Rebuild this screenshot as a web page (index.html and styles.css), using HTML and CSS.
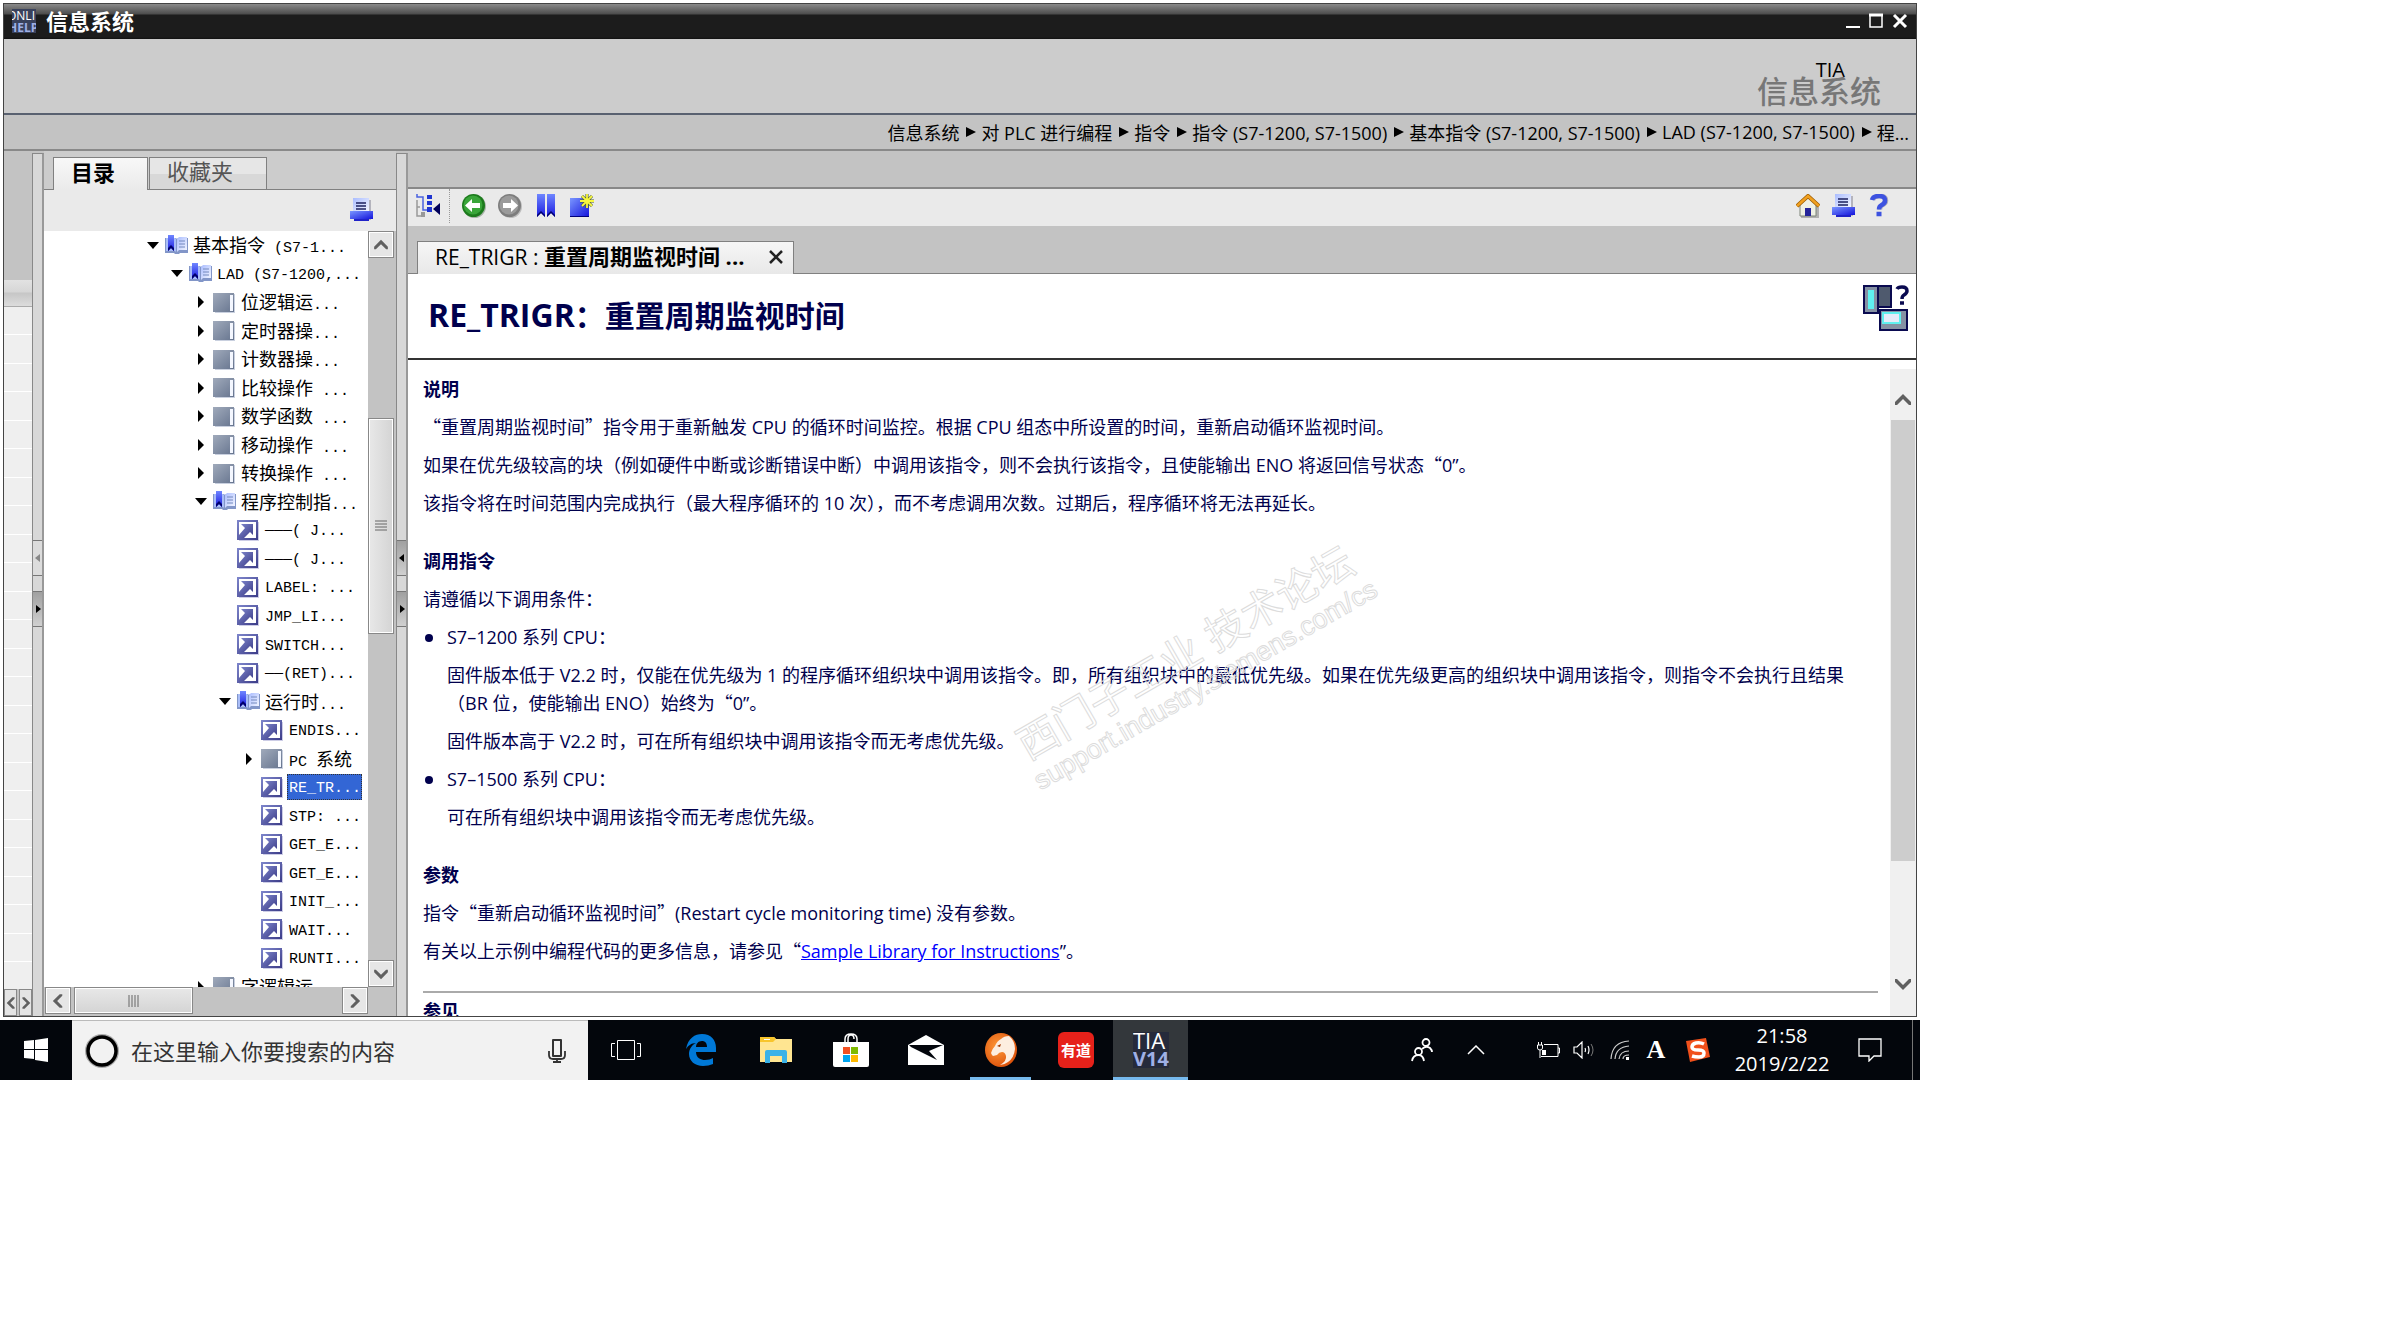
FILE: index.html
```html
<!DOCTYPE html>
<html lang="zh-CN">
<head>
    <meta charset="UTF-8">
    <meta name="viewport" content="width=device-width, initial-scale=1.0">
    <title>信息系统</title>
    <link rel="stylesheet" href="styles.css">
</head>
<body>
    <!-- icon library -->
    <svg class="icon-defs" width="0" height="0" aria-hidden="true">
        <defs>
            <linearGradient id="g-blue" x1="0" y1="0" x2="1" y2="1">
                <stop offset="0" stop-color="#7a96ff"/><stop offset="1" stop-color="#1414dc"/>
            </linearGradient>
            <linearGradient id="g-mark" x1="0" y1="0" x2="0" y2="1">
                <stop offset="0" stop-color="#6f86ff"/><stop offset="1" stop-color="#1a1ae0"/>
            </linearGradient>
            <linearGradient id="g-page" x1="0" y1="0" x2="1" y2="1">
                <stop offset="0" stop-color="#a9bcff"/><stop offset="1" stop-color="#f6f8ff"/>
            </linearGradient>
            <linearGradient id="g-closed" x1="0" y1="0" x2="1" y2="1">
                <stop offset="0" stop-color="#a0aabb"/><stop offset="1" stop-color="#67758f"/>
            </linearGradient>
            <linearGradient id="g-doc" x1="0" y1="0" x2="1" y2="1">
                <stop offset="0" stop-color="#7e86cc"/><stop offset="1" stop-color="#3c3c88"/>
            </linearGradient>
            <radialGradient id="g-fire" cx=".4" cy=".4" r=".7">
                <stop offset="0" stop-color="#ff9a3a"/><stop offset="1" stop-color="#d94b06"/>
            </radialGradient>
            <symbol id="i-open" viewBox="0 0 24 21">
                <path d="M0 3h11l1 1 1-1h10v15h-8l-1 1h-4l-1-1H0z" fill="#8296c8"/>
                <path d="M1 3h9l1 1v13l-1-1H1z" fill="#a9bdf8"/>
                <path d="M12 4l2-2h8v13h-8l-2 2z" fill="url(#g-page)"/>
                <path d="M14 6h6M14 9h6M14 12h6" stroke="#7388bd"/>
                <path d="M3 0h6v16l-3-3-3 3z" fill="url(#g-mark)"/>
                <path d="M3 16v-3l3-3 3 3v3l-3-3z" fill="#00006e"/>
            </symbol>
            <symbol id="i-closed" viewBox="0 0 24 21">
                <path d="M2 2h20v19H2z" fill="#c9d0df"/>
                <path d="M0 1h21v19H0z" fill="url(#g-closed)"/>
                <path d="M17 3h3v16h-3z" fill="#f4f7ff"/>
            </symbol>
            <symbol id="i-doc" viewBox="0 0 24 21">
                <path d="M2 2h20v19H2z" fill="#cdcde6"/>
                <path d="M0 0h21v20H0z" fill="url(#g-doc)"/>
                <path d="M2 2h17v16H2z" fill="#fff"/>
                <path d="M4 4h12v11l-3-3-6 6H2v-3l6-7z" fill="url(#g-doc)"/>
            </symbol>
            <symbol id="i-print" viewBox="0 0 24 24">
                <path d="M5 2h16v20H5z" fill="#b4b4bd"/>
                <path d="M3 0h16v14H3z" fill="url(#g-page)"/>
                <path d="M6 5h10M6 8h10M6 11h10" stroke="#1c2260" stroke-width="1.600"/>
                <path d="M0 13h23v8H0z" fill="url(#g-blue)"/>
                <path d="M4 21h15v2H4z" fill="#2022c8"/>
            </symbol>
            <symbol id="c-up" viewBox="0 0 18 14"><path d="M1 12v-3l8-8 8 8v3h-2L9 6l-6 6z" fill="#606060"/></symbol>
            <symbol id="c-down" viewBox="0 0 18 14"><path d="M1 2v3l8 8 8-8V2h-2L9 8 3 2z" fill="#606060"/></symbol>
            <symbol id="c-left" viewBox="0 0 14 18"><path d="M12 1H9L1 9l8 8h3v-2L6 9l6-6z" fill="#606060"/></symbol>
            <symbol id="c-right" viewBox="0 0 14 18"><path d="M2 1h3l8 8-8 8H2v-2l6-6-6-6z" fill="#606060"/></symbol>
        </defs>
    </svg>

    <div class="desktop">
        <div class="help-window">
            <div class="titlebar">
                <svg class="app-logo" width="24" height="24" viewBox="0 0 24 24" aria-hidden="true">
                    <rect width="24" height="24" fill="#39415c"/>
                    <text x="-5" y="11" class="logo-top">ONLI</text>
                    <text x="-4" y="23" class="logo-bottom">HELP</text>
                </svg>
                <h1>信息系统</h1>
                <div class="window-buttons">
                    <button aria-label="最小化"><svg width="14" height="16"><path d="M0 14h14" stroke="#fff" stroke-width="2"/></svg></button>
                    <button aria-label="最大化"><svg width="14" height="16"><path d="M1 2v12h12V2z" fill="none" stroke="#fff" stroke-width="1.500"/><path d="M0 2h14" stroke="#fff" stroke-width="3"/></svg></button>
                    <button aria-label="关闭"><svg width="16" height="16"><path d="M2 2l12 12M14 2L2 14" stroke="#fff" stroke-width="3"/></svg></button>
                </div>
            </div>

            <div class="banner">
                <div class="brand">TIA</div>
                <div class="product">信息系统</div>
            </div>

            <nav class="breadcrumb">
                <span>信息系统</span><i></i><span>对 PLC 进行编程</span><i></i><span>指令</span><i></i><span>指令 (S7-1200, S7-1500)</span><i></i><span>基本指令 (S7-1200, S7-1500)</span><i></i><span>LAD (S7-1200, S7-1500)</span><i></i><span>程...</span>
            </nav>

            <div class="workspace">
                <div class="side-strip">
                    <div class="strip-head"></div>
                    <div class="strip-rows"></div>
                    <div class="strip-scroll">
                        <button aria-label="向左"><svg width="10" height="16"><use href="#c-left"/></svg></button>
                        <button aria-label="向右"><svg width="10" height="16"><use href="#c-right"/></svg></button>
                    </div>
                </div>

                <div class="splitter">
                    <button class="handle light" aria-label="收起"><svg width="6" height="8"><path d="M5 0v8L0 4z" fill="#888"/></svg></button>
                    <button class="handle" aria-label="展开"><svg width="6" height="8"><path d="M1 0v8l5-4z"/></svg></button>
                </div>

                <div class="contents-panel">
                    <div class="tabs">
                        <button class="tab active">目录</button>
                        <button class="tab">收藏夹</button>
                    </div>
                    <div class="contents-tools">
                        <button aria-label="打印"><svg width="24" height="24"><use href="#i-print"/></svg></button>
                    </div>
                    <div class="tree-area">
                        <ul class="tree">
                            <li class="l1"><b class="open"></b><svg><use href="#i-open"/></svg><a href="#"><span>基本指令</span> (S7-1...</a></li>
                            <li class="l2"><b class="open"></b><svg><use href="#i-open"/></svg><a href="#">LAD (S7-1200,...</a></li>
                            <li class="l3"><b class="shut"></b><svg><use href="#i-closed"/></svg><a href="#"><span>位逻辑运</span>...</a></li>
                            <li class="l3"><b class="shut"></b><svg><use href="#i-closed"/></svg><a href="#"><span>定时器操</span>...</a></li>
                            <li class="l3"><b class="shut"></b><svg><use href="#i-closed"/></svg><a href="#"><span>计数器操</span>...</a></li>
                            <li class="l3"><b class="shut"></b><svg><use href="#i-closed"/></svg><a href="#"><span>比较操作</span> ...</a></li>
                            <li class="l3"><b class="shut"></b><svg><use href="#i-closed"/></svg><a href="#"><span>数学函数</span> ...</a></li>
                            <li class="l3"><b class="shut"></b><svg><use href="#i-closed"/></svg><a href="#"><span>移动操作</span> ...</a></li>
                            <li class="l3"><b class="shut"></b><svg><use href="#i-closed"/></svg><a href="#"><span>转换操作</span> ...</a></li>
                            <li class="l3"><b class="open"></b><svg><use href="#i-open"/></svg><a href="#"><span>程序控制指</span>...</a></li>
                            <li class="l4"><b></b><svg><use href="#i-doc"/></svg><a href="#">───( J...</a></li>
                            <li class="l4"><b></b><svg><use href="#i-doc"/></svg><a href="#">───( J...</a></li>
                            <li class="l4"><b></b><svg><use href="#i-doc"/></svg><a href="#">LABEL: ...</a></li>
                            <li class="l4"><b></b><svg><use href="#i-doc"/></svg><a href="#">JMP_LI...</a></li>
                            <li class="l4"><b></b><svg><use href="#i-doc"/></svg><a href="#">SWITCH...</a></li>
                            <li class="l4"><b></b><svg><use href="#i-doc"/></svg><a href="#">──(RET)...</a></li>
                            <li class="l4"><b class="open"></b><svg><use href="#i-open"/></svg><a href="#"><span>运行时</span>...</a></li>
                            <li class="l5"><b></b><svg><use href="#i-doc"/></svg><a href="#">ENDIS...</a></li>
                            <li class="l5"><b class="shut"></b><svg><use href="#i-closed"/></svg><a href="#">PC <span>系统</span></a></li>
                            <li class="l5"><b></b><svg><use href="#i-doc"/></svg><a href="#" class="selected">RE_TR...</a></li>
                            <li class="l5"><b></b><svg><use href="#i-doc"/></svg><a href="#">STP: ...</a></li>
                            <li class="l5"><b></b><svg><use href="#i-doc"/></svg><a href="#">GET_E...</a></li>
                            <li class="l5"><b></b><svg><use href="#i-doc"/></svg><a href="#">GET_E...</a></li>
                            <li class="l5"><b></b><svg><use href="#i-doc"/></svg><a href="#">INIT_...</a></li>
                            <li class="l5"><b></b><svg><use href="#i-doc"/></svg><a href="#">WAIT...</a></li>
                            <li class="l5"><b></b><svg><use href="#i-doc"/></svg><a href="#">RUNTI...</a></li>
                            <li class="l3"><b class="shut"></b><svg><use href="#i-closed"/></svg><a href="#"><span>字逻辑运</span>...</a></li>
                        </ul>
                        <div class="scroll-v">
                            <button aria-label="向上"><svg width="16" height="12"><use href="#c-up"/></svg></button>
                            <div class="thumb"><svg width="12" height="12"><path d="M0 1h12M0 4h12M0 7h12M0 10h12" stroke="#666"/></svg></div>
                            <button aria-label="向下"><svg width="16" height="12"><use href="#c-down"/></svg></button>
                        </div>
                    </div>
                    <div class="scroll-h">
                        <button aria-label="向左"><svg width="12" height="16"><use href="#c-left"/></svg></button>
                        <div class="thumb"><svg width="12" height="12"><path d="M1 0v12M4 0v12M7 0v12M10 0v12" stroke="#666"/></svg></div>
                        <button aria-label="向右"><svg width="12" height="16"><use href="#c-right"/></svg></button>
                    </div>
                </div>

                <div class="splitter">
                    <button class="handle" aria-label="收起"><svg width="6" height="8"><path d="M5 0v8L0 4z"/></svg></button>
                    <button class="handle" aria-label="展开"><svg width="6" height="8"><path d="M1 0v8l5-4z"/></svg></button>
                </div>

                <div class="content-panel">
                    <div class="toolbar">
                        <button class="tree-toggle" aria-label="隐藏目录">
                            <svg width="24" height="24" viewBox="0 0 24 24"><path d="M1 0v3h6v13h4" fill="none" stroke="#4a62e0" stroke-width="1.500"/><path d="M1 6v16h4M1 13h3" fill="none" stroke="#999" stroke-width="1.500"/><path d="M5 18h4v5H5z" fill="#999"/><path d="M11 1h5v4h-5zM11 7h5v4h-5zM11 13h5v5h-5z" fill="#1f35d0"/><path d="M24 9v12l-7-6z" fill="#00005a"/></svg>
                        </button>
                        <button aria-label="后退">
                            <svg width="24" height="24" viewBox="0 0 24 24"><circle cx="12.500" cy="12.500" r="11.500" fill="#a9b3a9"/><circle cx="11.500" cy="11.500" r="11.500" fill="#1c7a1c"/><circle cx="11" cy="11" r="9.500" fill="#39a539"/><path d="M3 11.500L10 5v4h8v5h-8v4z" fill="#fff"/></svg>
                        </button>
                        <button aria-label="前进">
                            <svg width="24" height="24" viewBox="0 0 24 24"><circle cx="12.500" cy="12.500" r="11.500" fill="#bdbdbd"/><circle cx="11.500" cy="11.500" r="11.500" fill="#7d7d7d"/><circle cx="11" cy="11" r="9.500" fill="#9b9b9b"/><path d="M20 11.500L13 5v4H5v5h8v4z" fill="#fff"/></svg>
                        </button>
                        <button aria-label="收藏夹">
                            <svg width="24" height="24" viewBox="0 0 24 24"><path d="M3 0h8v23l-4-4-4 4zM13 0h8v23l-4-4-4 4z" fill="url(#g-mark)"/><path d="M3 23v-2l4-4 4 4v2l-4-4zM13 23v-2l4-4 4 4v2l-4-4z" fill="#00006e"/></svg>
                        </button>
                        <button aria-label="新建标签页">
                            <svg width="24" height="24" viewBox="0 0 24 24"><path d="M0 4h19v19H0z" fill="url(#g-blue)"/><path d="M0 22.500h19" stroke="#00007a"/><path d="M17 0v14M10 7h14M12 2l10 10M22 2L12 12" stroke="#4b5a30" stroke-width="3"/><path d="M17 0v14M10 7h14M12 2l10 10M22 2L12 12" stroke="#f8f840" stroke-width="1.800"/></svg>
                        </button>
                        <div class="tools-right">
                            <button aria-label="主页">
                                <svg width="24" height="24" viewBox="0 0 24 24"><path d="M5 11h18v13H5z" fill="#b0b0b0"/><path d="M4 10l8-7 8 7v12H4z" fill="#eef0e4" stroke="#7d8478"/><path d="M9 14h6v8H9z" fill="#25259a"/><path d="M1 12L12 2l11 10" fill="none" stroke="#9a5a00" stroke-width="4"/><path d="M1 12L12 2l11 10" fill="none" stroke="#f0a020" stroke-width="2.500"/></svg>
                            </button>
                            <button aria-label="打印"><svg width="24" height="24"><use href="#i-print"/></svg></button>
                            <button aria-label="帮助">
                                <svg width="24" height="24" viewBox="0 0 24 24"><path d="M5 6q1-4 7-4 6 0 6 4.500 0 3-4 5-2 1-2 4" fill="none" stroke="#aab" stroke-width="4.500"/><path d="M4 6q1-4 7-4 6 0 6 4.500 0 3-4 5-2 1-2 4M8.500 20h5" fill="none" stroke="#3d52e0" stroke-width="4.500"/></svg>
                            </button>
                        </div>
                    </div>

                    <div class="page-tabs">
                        <div class="page-tab">
                            <span>RE_TRIGR : <b>重置周期监视时间 ...</b></span>
                            <button aria-label="关闭标签页"><svg width="16" height="16"><path d="M2 2l12 12M14 2L2 14" stroke="#222" stroke-width="2.500"/></svg></button>
                        </div>
                    </div>

                    <div class="page-head">
                        <h2><span>RE_TRIGR</span>：重置周期监视时间</h2>
                        <svg width="46" height="46" viewBox="0 0 46 46" aria-hidden="true">
                            <path d="M1 1h27v21H15v6H1z" fill="#4f5a6e" stroke="#0a0a50" stroke-width="2"/>
                            <path d="M1 1h14v27H1z" fill="#8591a3" stroke="#0a0a50" stroke-width="2"/>
                            <path d="M5 5h6v19H5z" fill="#5ff0f0"/>
                            <path d="M17 25h27v20H17z" fill="#8591a3" stroke="#0a0a50" stroke-width="2"/>
                            <path d="M20 28h17v10H20z" fill="#e6ecfa" stroke="#5ff0f0" stroke-width="2"/>
                            <path d="M34 4q1-2 5-2 5 0 5 4 0 2-3 4-2 1-2 4M37 18h4" fill="none" stroke="#0a0a50" stroke-width="3.500"/>
                        </svg>
                    </div>

                    <div class="page-scroll">
                        <article>
                            <section>
                                <h3>说明</h3>
                                <p><q>“</q>重置周期监视时间<q>”</q>指令用于重新触发 CPU 的循环时间监控。根据 CPU 组态中所设置的时间，重新启动循环监视时间。</p>
                                <p>如果在优先级较高的块（例如硬件中断或诊断错误中断）中调用该指令，则不会执行该指令，且使能输出 ENO 将返回信号状态<q>“</q>0”。</p>
                                <p>该指令将在时间范围内完成执行（最大程序循环的 10 次<q>），</q>而不考虑调用次数。过期后，程序循环将无法再延长。</p>
                            </section>
                            <section>
                                <h3>调用指令</h3>
                                <p>请遵循以下调用条件：</p>
                                <ul>
                                    <li>
                                        <p>S7–1200 系列 CPU：</p>
                                        <p>固件版本低于 V2.2 时，仅能在优先级为 1 的程序循环组织块中调用该指令。即，所有组织块中的最低优先级。如果在优先级更高的组织块中调用该指令，则指令不会执行且结果（BR 位，使能输出 ENO）始终为<q>“</q>0”。</p>
                                        <p>固件版本高于 V2.2 时，可在所有组织块中调用该指令而无考虑优先级。</p>
                                    </li>
                                    <li>
                                        <p>S7–1500 系列 CPU：</p>
                                        <p>可在所有组织块中调用该指令而无考虑优先级。</p>
                                    </li>
                                </ul>
                            </section>
                            <section>
                                <h3>参数</h3>
                                <p>指令<q>“</q>重新启动循环监视时间<q>”</q>(Restart cycle monitoring time) 没有参数。</p>
                                <p>有关以上示例中编程代码的更多信息，请参见<q>“</q><a href="#">Sample Library for Instructions</a>”。</p>
                            </section>
                            <hr>
                            <h3>参见</h3>
                        </article>
                        <div class="page-scrollbar">
                            <button aria-label="向上"><svg width="18" height="14"><use href="#c-up"/></svg></button>
                            <div class="thumb"></div>
                            <button aria-label="向下"><svg width="18" height="14"><use href="#c-down"/></svg></button>
                        </div>
                        <svg class="watermark" width="420" height="300" viewBox="0 0 420 300" aria-hidden="true">
                            <g transform="rotate(-30 50 240)">
                                <text x="42" y="220" font-size="41">西门子工业 技术论坛</text>
                                <text x="38" y="252" font-size="27">support.industry.siemens.com/cs</text>
                            </g>
                        </svg>
                    </div>
                </div>
            </div>
        </div>

        <div class="taskbar">
            <button class="start" aria-label="开始"><svg width="24" height="24" viewBox="0 0 24 24"><path d="M0 3l10-1v9H0zM11 2l13-2v11H11zM0 12h10v9L0 20zM11 12h13v12l-13-2z" fill="#fff"/></svg></button>
            <div class="search">
                <svg width="34" height="34" viewBox="0 0 34 34" aria-hidden="true"><circle cx="17" cy="17" r="16" fill="none" stroke="#aaa" stroke-width="2"/><circle cx="17" cy="17" r="14" fill="none" stroke="#000" stroke-width="3.500"/></svg>
                <input type="text" placeholder="在这里输入你要搜索的内容" aria-label="搜索">
                <svg width="18" height="24" viewBox="0 0 18 24" aria-hidden="true"><path d="M5 1h8v16H5z" fill="none" stroke="#333" stroke-width="2" stroke-linejoin="round"/><path d="M1 12v4q0 4 4 4h8q4 0 4-4v-4M9 20v3M5 23h8" fill="none" stroke="#333" stroke-width="1.800"/></svg>
            </div>
            <button class="app" aria-label="任务视图"><svg width="30" height="20" viewBox="0 0 30 20"><path d="M6.500.5h17v19h-17zM4 3.500H.5v13H4M26 3.500h3.500v13H26" fill="none" stroke="#fff"/></svg></button>
            <button class="app" aria-label="Edge"><svg width="30" height="32" viewBox="0 0 30 32"><path d="M0 15C2 4 9 0 16 0c9 0 14 6 14 14v4H10c0 6 5 8 9 8 3 0 6-1 8-2v6c-3 1-6 2-10 2C9 32 3 27 3 20c0-5 3-9 7-11-5 0-8 3-10 6zm10-2h11c0-4-2-6-5-6-4 0-6 3-6 6z" fill="#0078d7" fill-rule="evenodd"/></svg></button>
            <button class="app" aria-label="文件资源管理器"><svg width="32" height="26" viewBox="0 0 32 26"><path d="M0 0h14l2 2h16v23H0z" fill="#ffe591"/><path d="M0 0h14l2 2-3 3H0z" fill="#f8c52c"/><path d="M4 2h6v1H4z" fill="#fff"/><path d="M5 26V15q0-2 2-2h18q2 0 2 2v11h-5v-7H10v7z" fill="#3bb2e8"/></svg></button>
            <button class="app" aria-label="应用商店"><svg width="36" height="34" viewBox="0 0 36 34"><path d="M12 10V6q0-5 6-5t6 5v4M15 10V6q0-4 3-4t3 4" fill="none" stroke="#fff" stroke-width="1.500"/><path d="M0 9h36v23q0 2-2 2H2q-2 0-2-2z" fill="#fff"/><path d="M10 14h7v7h-7z" fill="#f25022"/><path d="M18 14h7v7h-7z" fill="#7fba00"/><path d="M10 22h7v7h-7z" fill="#00a4ef"/><path d="M18 22h7v7h-7z" fill="#ffb900"/></svg></button>
            <button class="app" aria-label="邮件"><svg width="36" height="30" viewBox="0 0 36 30"><path d="M0 10L18 0l18 10v20H0z" fill="#fff"/><path d="M1 10h34L21 16l8 9L3 12z" fill="#03060c"/></svg></button>
            <button class="app running" aria-label="猎豹浏览器"><svg width="32" height="34" viewBox="0 0 32 34"><ellipse cx="16" cy="17" rx="16" ry="17" fill="url(#g-fire)"/><path d="M6 20q1-4 4-7 2-5 6-7 3-3 8-3 6 5 6 13-1 9-7 13-4 3-8 3 7-4 6-9-1-4-4-4-3 0-5 3l-4 1-1-1z" fill="#fdeee0"/><path d="M12 13l4-2-1 3z" fill="#a33a00"/></svg></button>
            <button class="app" aria-label="有道"><svg width="36" height="36" viewBox="0 0 36 36"><rect width="36" height="36" rx="6" fill="#e6211a"/><text x="3" y="24" class="youdao">有道</text></svg></button>
            <button class="app current" aria-label="TIA V14"><svg width="36" height="36" viewBox="0 0 36 36"><rect width="36" height="36" fill="#252a3b"/><text x="0" y="17" class="tia">TIA</text><text x="0" y="34" class="v14">V14</text></svg></button>
            <div class="tray">
                <button class="wide" aria-label="人脉"><svg width="22" height="24" viewBox="0 0 22 24"><g fill="none" stroke="#fff" stroke-width="1.800"><circle cx="15" cy="4.500" r="3.500"/><path d="M11 11q4-4 8-1 2 2 2 4"/><circle cx="7.500" cy="13.500" r="3.500"/><path d="M1 23q1-6 6.500-6 4.500 0 5.500 6"/></g></svg></button>
                <button class="wide" aria-label="显示隐藏的图标"><svg width="18" height="10"><path d="M1 9l8-8 8 8" fill="none" stroke="#fff" stroke-width="1.500"/></svg></button>
                <button class="gap-before" aria-label="电源"><svg width="24" height="18" viewBox="0 0 24 18"><path d="M8 3.500h14v12H5M22 7h1.500v5H22" fill="none" stroke="#fff"/><path d="M1.500 4h5v3q0 2-2.500 2T1.500 7zM2.500 1v3M5.500 1v3M4 9v8" fill="none" stroke="#fff"/><path d="M6 9h4v5H6z" fill="#fff"/></svg></button>
                <button aria-label="音量"><svg width="22" height="18" viewBox="0 0 22 18"><path d="M1 6h3l5-5v16l-5-5H1zM12 7q1 2 0 4M15 5q2 4 0 8" fill="none" stroke="#fff" stroke-width="1.200"/><path d="M18 3q4 6 0 12" fill="none" stroke="#777"/></svg></button>
                <button aria-label="网络"><svg width="20" height="20" viewBox="0 0 20 20"><path d="M1 19Q2 2 19 1M5 19Q6 7 19 6M9 19q1-8 10-8M13 19q0-4 6-4" fill="none" stroke="#ccc" stroke-width="1.200"/><path d="M16 17h3v3h-3z" fill="#fff"/></svg></button>
                <button class="ime">A</button>
                <button class="sogou" aria-label="搜狗输入法"><svg width="26" height="26" viewBox="0 0 26 26"><path d="M1 4l20-3 4 19-20 5z" fill="#f1501b"/><path d="M19 7q-4-2-8-1-4 1-4 4t6 3q6 0 6 3 0 4-5 4-4 0-7-1" fill="none" stroke="#fff" stroke-width="3.500"/></svg></button>
                <div class="clock"><span>21:58</span><span>2019/2/22</span></div>
                <button class="notice" aria-label="通知"><svg width="24" height="24" viewBox="0 0 24 24"><path d="M1 1h22v17h-7l-5 5v-5H1z" fill="none" stroke="#fff" stroke-width="1.300"/></svg></button>
                <div class="show-desktop"></div>
            </div>
        </div>
    </div>
</body>
</html>
```
FILE: styles.css
```css
* {
    box-sizing: border-box;
}

body {
    margin: 0;
    background: #fff;
    color: #000;
    font-family: "Open Sans", "Noto Sans CJK SC", sans-serif;
    font-size: 17px;
}

button {
    margin: 0;
    padding: 0;
    border: 0;
    background: none;
    color: inherit;
    font: inherit;
    display: flex;
    align-items: center;
    justify-content: center;
    flex-shrink: 0;
}

svg {
    display: block;
    flex-shrink: 0;
}

.icon-defs {
    position: absolute;
}

.desktop {
    max-width: 1920px;
    height: 1080px;
    display: flex;
    flex-direction: column;
}

/* help window */
.help-window {
    flex: 1;
    min-height: 0;
    margin: 3px;
    border: 1px solid #444;
    display: flex;
    flex-direction: column;
}

.titlebar {
    height: 35px;
    padding: 0 8px 2px;
    display: flex;
    align-items: center;
    background: linear-gradient(#8a8a8a 0, #4c4c4c 10px, #1c1c1c 11px, #1c1c1c 33px, #111 35px);
    color: #fff;
}

.app-logo {
    overflow: hidden;
    margin-right: 10px;
}

.logo-top,
.logo-bottom {
    font: 12px "Open Sans", sans-serif;
    fill: #fff;
}

.logo-bottom {
    font-weight: bold;
    fill: #9fb0e6;
}

h1 {
    margin: 0;
    flex: 1;
    font-size: 22px;
    line-height: 32px;
}

.window-buttons {
    display: flex;
    gap: 9px;
}

.banner {
    height: 76px;
    padding: 20px 35px 0 0;
    background: #ccc;
    border-bottom: 2px solid #596170;
    display: flex;
    flex-direction: column;
    align-items: flex-end;
}

.brand {
    padding-right: 36px;
    font-size: 20px;
    line-height: 22px;
}

.product {
    font-size: 31px;
    font-weight: 500;
    line-height: 20px;
    color: #777;
}

.breadcrumb {
    height: 36px;
    padding: 0 7px 0 0;
    background: #c3c3c3;
    border-bottom: 2px solid #898989;
    display: flex;
    align-items: center;
    justify-content: flex-end;
    white-space: nowrap;
    overflow: hidden;
    font-size: 18px;
}

.breadcrumb i {
    margin: 0 5px 0 7px;
    border-left: 10px solid #000;
    border-top: 5px solid transparent;
    border-bottom: 5px solid transparent;
}

.workspace {
    flex: 1;
    min-height: 0;
    display: flex;
    background: #c3c3c3;
}

.side-strip {
    width: 28px;
    padding-top: 129px;
    display: flex;
    flex-direction: column;
}

.strip-head {
    height: 27px;
    background: linear-gradient(#e2e2e2, #d6d6d6 12px, #c6c6c6 13px, #dcdcdc);
    border-bottom: 1px solid #aaa;
}

.strip-rows {
    flex: 1;
    background: repeating-linear-gradient(#efefef 0 27px, #fff 27px 28px, #efefef 28px 56px, #fff 56px 57px);
}

.strip-scroll {
    display: flex;
    gap: 2px;
    height: 27px;
}

.strip-scroll button {
    flex: 1;
    border: 1px solid #888;
    background: #e4e4e4;
}

/* draggable bars between the panels */
.splitter {
    width: 12px;
    margin-top: 2px;
    padding-top: 386px;
    display: flex;
    flex-direction: column;
    gap: 15px;
    background: #d8d8d8;
    border: 1px solid #888;
    border-right: 2px solid #999;
    border-bottom: 0;
}

.handle {
    height: 36px;
    background: linear-gradient(#a0a0a0, #d0d0d0);
    border-top: 1px solid #777;
    border-bottom: 1px solid #777;
}

.handle.light {
    background: #dcdcdc;
}

/* table of contents */
.contents-panel {
    width: 352px;
    display: flex;
    flex-direction: column;
    background: #ccc;
}

.tabs {
    height: 39px;
    padding: 6px 0 0 9px;
    display: flex;
    gap: 1px;
    box-shadow: inset 0 -1px #808080;
}

.tab {
    width: 118px;
    border: 1px solid #808080;
    background: linear-gradient(#e6e6e6 50%, #d8d8d8 50%);
    color: #555;
    font-size: 22px;
    line-height: 26px;
    justify-content: flex-start;
    padding: 0 0 5px 17px;
}

.tab.active {
    width: 95px;
    border-bottom: 0;
    background: linear-gradient(#f8f8f8, #eaeaea);
    color: #000;
    font-weight: bold;
}

.contents-tools {
    height: 41px;
    padding: 0 22px 2px 0;
    background: #eaeaea;
    display: flex;
    align-items: center;
    justify-content: flex-end;
}

.tree-area {
    flex: 1;
    min-height: 0;
    display: flex;
    overflow: hidden;
}

.tree {
    flex: 1;
    height: 770px;
    margin: 0;
    padding: 0;
    list-style: none;
    background: #fff;
    display: grid;
    grid-template-rows: repeat(27, 1fr);
    font-family: "Liberation Mono", "Noto Sans CJK SC", monospace;
    font-size: 15px;
    line-height: 24px;
    white-space: nowrap;
}

.tree li {
    display: flex;
    align-items: center;
    overflow: hidden;
}

.tree svg {
    width: 24px;
    height: 21px;
    margin-right: 2px;
}

.tree b {
    width: 24px;
    display: flex;
    justify-content: center;
    flex-shrink: 0;
}

.tree b.open::before {
    content: "";
    border: 6px solid transparent;
    border-top: 7px solid #000;
    border-bottom: 0;
}

.tree b.shut::before {
    content: "";
    border: 6px solid transparent;
    border-left: 6px solid #000;
    border-right: 0;
}

.tree a {
    height: 26px;
    padding: 2px 1px 0;
    border: 1px dotted transparent;
    color: #000;
    text-decoration: none;
}

.tree a span {
    font-size: 18px;
}

.tree a.selected {
    width: 75px;
    background: #3366d5;
    border-color: #333;
    color: #fff;
}

.l1 { padding-left: 97px; }
.l2 { padding-left: 121px; }
.l3 { padding-left: 145px; }
.l4 { padding-left: 169px; }
.l5 { padding-left: 193px; }

.scroll-v {
    width: 28px;
    padding: 0 2px 0 0;
    background: #c3c3c3;
    display: flex;
    flex-direction: column;
}

.scroll-v button,
.scroll-h button {
    width: 26px;
    height: 27px;
    background: #e6e6e6;
    border: 1px solid #888;
    box-shadow: inset 0 0 0 1px #fff;
}

.scroll-v button:last-child {
    margin-top: auto;
}

.scroll-v .thumb,
.scroll-h .thumb {
    border: 1px solid #888;
    box-shadow: inset 0 0 0 1px #fff;
    display: flex;
    align-items: center;
    justify-content: center;
}

.scroll-v .thumb {
    height: 216px;
    margin-top: 160px;
    background: linear-gradient(90deg, #e8e8e8, #d4d4d4);
}

.scroll-h {
    height: 29px;
    padding: 0 28px 2px 1px;
    background: #c3c3c3;
    display: flex;
}

.scroll-h .thumb {
    width: 119px;
    margin: 0 auto 0 3px;
    background: linear-gradient(#e8e8e8, #d4d4d4);
}

/* help page */
.content-panel {
    flex: 1;
    min-width: 0;
    padding-top: 36px;
    display: flex;
    flex-direction: column;
}

.toolbar {
    height: 39px;
    padding: 0 24px 3px 8px;
    border-top: 2px solid #888;
    background: #eaeaea;
    display: flex;
    align-items: center;
    gap: 12px;
}

.tree-toggle {
    padding-right: 9px;
    border-right: 1px dotted #999;
    height: 34px;
}

.tools-right {
    margin-left: auto;
    display: flex;
    gap: 12px;
}

.page-tabs {
    height: 48px;
    padding: 15px 0 0 9px;
    display: flex;
    box-shadow: inset 0 -1px #808080;
}

.page-tab {
    width: 377px;
    padding: 0 9px 3px 17px;
    border: 1px solid #808080;
    border-bottom: 0;
    background: linear-gradient(#f6f6f6, #e8e8e8);
    display: flex;
    align-items: center;
    justify-content: space-between;
    white-space: nowrap;
    font-size: 21px;
    line-height: 28px;
}

.page-tab b {
    font-size: 22px;
}

.page-head {
    height: 86px;
    padding: 11px 7px 0 20px;
    border-bottom: 2px solid #333;
    background: #fff;
    display: flex;
    justify-content: space-between;
}

h2 {
    margin: 0;
    color: #00004d;
    font-size: 30px;
    line-height: 60px;
}

h2 span {
    font-size: 32px;
}

.page-scroll {
    flex: 1;
    min-height: 0;
    padding-top: 9px;
    background: #fff;
    display: flex;
    position: relative;
    overflow: hidden;
}

article {
    flex: 1;
    padding: 6px 12px 0 15px;
    color: #00004d;
    font-size: 18px;
    line-height: 28px;
}

h3 {
    margin: 0 0 10px;
    font-size: 18px;
    line-height: 28px;
}

p {
    margin: 0 0 10px;
}

section {
    margin-bottom: 30px;
}

article ul {
    margin: 0;
    padding-left: 24px;
}

article ul li {
    list-style: none;
    position: relative;
}

article ul li::before {
    content: "";
    position: absolute;
    left: -22px;
    top: 11px;
    width: 8px;
    height: 8px;
    border-radius: 50%;
    background: #00004d;
}

/* full-width Chinese punctuation */
q {
    quotes: none;
    font-family: "Noto Sans CJK SC", sans-serif;
    line-height: 1px;
}

article a {
    color: #00f;
}

hr {
    margin: -4px 0 4px;
    border: 0;
    border-top: 2px solid #aaa;
}

.page-scrollbar {
    width: 26px;
    padding: 24px 1px 25px;
    background: #f0f0f0;
    display: flex;
    flex-direction: column;
    align-items: center;
}

.page-scrollbar .thumb {
    width: 100%;
    height: 441px;
    margin: 13px 0 auto;
    background: #cdcdcd;
}

.watermark {
    position: absolute;
    left: 587px;
    top: 174px;
    fill: none;
    stroke: #dcdcdc;
    pointer-events: none;
    font-family: "Liberation Sans", "Noto Sans CJK SC", sans-serif;
}

/* taskbar */
.taskbar {
    height: 60px;
    background: #03060c;
    color: #fff;
    display: flex;
}

.start {
    width: 72px;
}

.search {
    width: 516px;
    padding: 0 22px 0 13px;
    background: #f2f2f2;
    border-top: 1px solid #bbb;
    display: flex;
    align-items: center;
    gap: 12px;
}

.search input {
    flex: 1;
    min-width: 0;
    padding: 0 0 2px;
    border: 0;
    background: none;
    font: 22px "Noto Sans CJK SC", sans-serif;
}

.search input::placeholder {
    color: #333;
    opacity: 1;
}

.app {
    width: 75px;
}

.app.running {
    background: linear-gradient(#76b9ed, #76b9ed) center bottom / 61px 3px no-repeat;
}

.app.current {
    background: #33373b;
    border-bottom: 3px solid #76b9ed;
    padding-top: 3px;
}

.youdao {
    font: bold 15px "Noto Sans CJK SC", sans-serif;
    fill: #fff;
}

.tia,
.v14 {
    font: 22px "Open Sans", sans-serif;
    fill: #fff;
}

.v14 {
    font-weight: bold;
    font-size: 20px;
    fill: #9fb0e6;
}

.tray {
    margin-left: auto;
    display: flex;
}

.tray button {
    width: 36px;
}

.tray .wide {
    width: 54px;
}

.tray .gap-before {
    margin-left: 27px;
}

.tray .ime {
    font: bold 26px "Liberation Serif", serif;
}

.tray .sogou {
    width: 48px;
}

.clock {
    width: 120px;
    display: flex;
    flex-direction: column;
    align-items: center;
    justify-content: center;
    font-size: 20px;
    line-height: 28px;
}

.tray .notice {
    width: 56px;
}

.show-desktop {
    width: 8px;
    margin-left: 14px;
    border-left: 1px solid #777;
}
```
